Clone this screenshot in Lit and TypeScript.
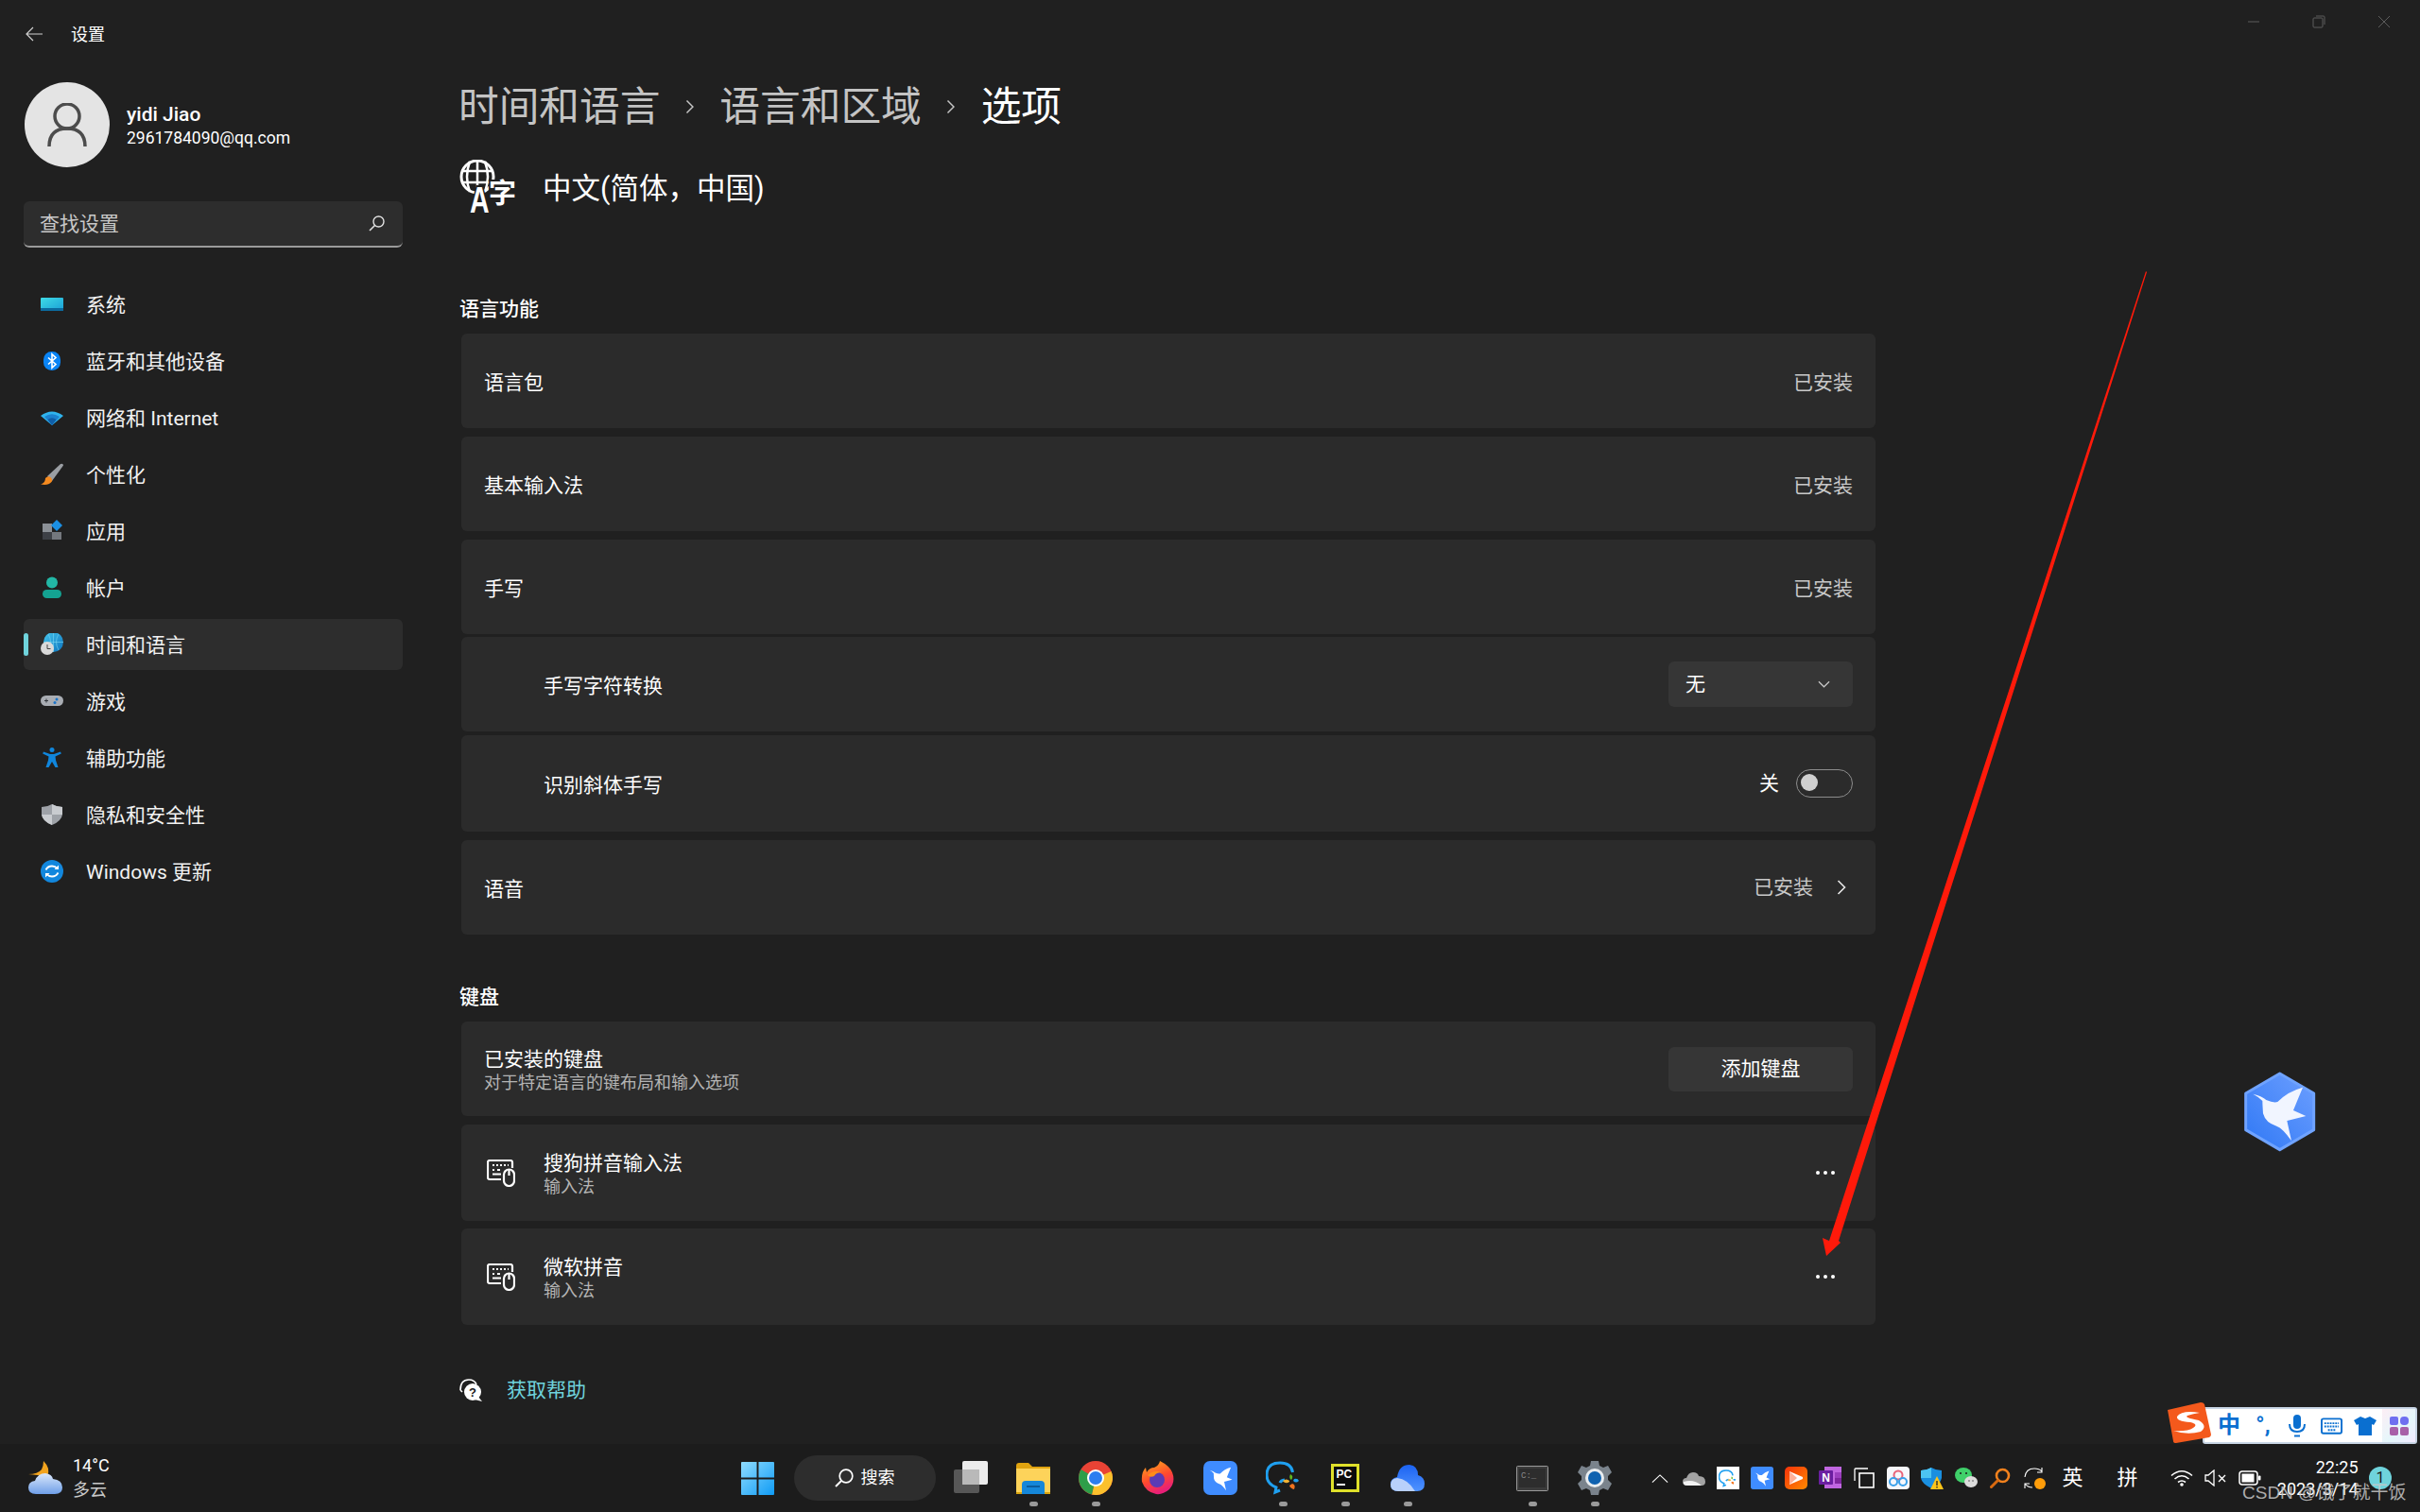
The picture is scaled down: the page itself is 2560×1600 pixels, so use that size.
import { LitElement, html, css, svg } from 'lit';
import { customElement } from 'lit/decorators.js';

const icon = (box: string, size: number, body: unknown, h = size) =>
  html`<svg width=${size} height=${h} viewBox=${box} style="display:block">${body}</svg>`;

// hummingbird from the download app, used on the desktop and in the taskbar
const BIRD = 'M130 143Q160 150 172 162Q195 172 208 168Q240 135 288 122Q272 160 258 195L298 213L238 228L252 292Q225 252 205 245Q170 235 162 205Q160 175 160 165Q145 150 130 143Z';

const navItems = [
  {
    label: '系统',
    icon: svg`<defs><linearGradient id="sys" x1="0" y1="0" x2="1" y2="1"><stop offset="0" stop-color="#3fdbe6"/><stop offset="1" stop-color="#1a9fd6"/></linearGradient></defs>
      <rect x="0" y="5" width="24" height="14" rx="1" fill="url(#sys)"/><rect x="0" y="16" width="24" height="3" fill="#0b6a9e"/>`,
  },
  {
    label: '蓝牙和其他设备',
    icon: svg`<rect x="3" y="2" width="18" height="20" rx="8.5" fill="#0a84f5"/><path d="M8 8.5l8 7-4 3.6V4.9l4 3.6-8 7" fill="none" stroke="#fff" stroke-width="1.6"/>`,
  },
  {
    label: '网络和 Internet',
    icon: svg`<path d="M0 10Q12 1 24 10L12 20Z" fill="#2fb4ee"/><path d="M4 11Q12 5.500 20 11L12 20Z" fill="#1c82cf"/><path d="M7.500 14Q12 10.500 16.500 14L12 20Z" fill="#0f5ea8"/>`,
  },
  {
    label: '个性化',
    icon: svg`<path d="M7 14L21 1q3-1 3 1.500L12 19Z" fill="#9a9ea3"/><path d="M0 22.500Q5 21 5 16q3-3 6-.5 2 2.500 .5 4.500Q8 24 0 22.500Z" fill="#f58a1f"/>`,
  },
  {
    label: '应用',
    icon: svg`<rect x="2" y="4" width="10" height="9" fill="#8b9096"/><rect x="2" y="13" width="10" height="8" fill="#3d4046"/><rect x="12" y="13" width="10" height="8" fill="#74787e"/><path d="M17 0l6 6-6 6-6-6Z" fill="#1b8fe3"/>`,
  },
  {
    label: '帐户',
    icon: svg`<circle cx="12" cy="6.500" r="6" fill="#22b8a6"/><rect x="2" y="14" width="20" height="9" rx="4.500" fill="#14a392"/>`,
  },
  {
    label: '时间和语言',
    icon: svg`<defs><linearGradient id="glb" x1="0" y1="0" x2="1" y2="1"><stop offset="0" stop-color="#45c6ee"/><stop offset="1" stop-color="#0c73bd"/></linearGradient></defs>
      <circle cx="13.500" cy="9.500" r="10.500" fill="url(#glb)"/><path d="M3 9.500h21M13.500-1v21M8 1q5 8 0 17M19 1q-5 8 0 17" fill="none" stroke="#7bd7f2" stroke-width=".6"/>
      <circle cx="7" cy="16" r="7" fill="#d9d9d9"/><path d="M7 12v4.500h3.500" fill="none" stroke="#444" stroke-width="1"/>`,
  },
  {
    label: '游戏',
    icon: svg`<rect x="0" y="6" width="24" height="11" rx="5.500" fill="#a9adb3"/><path d="M4 11.500h4M6 9.500v4" stroke="#33373c" stroke-width="1"/><circle cx="17" cy="10" r="1.500" fill="#1a74c9"/><circle cx="15" cy="13.500" r="1.500" fill="#1a74c9"/>`,
  },
  {
    label: '辅助功能',
    icon: svg`<circle cx="12" cy="3.500" r="2.500" fill="#1086dc"/><path d="M3 5.500l7 2.500h4l7-2.500 .8 2-6.300 3 .5 4 2.500 7.500h-3L12 16l-3.500 6h-3L8 14.500l.5-4-6.300-3Z" fill="#1086dc"/>`,
  },
  {
    label: '隐私和安全性',
    icon: svg`<path d="M12 1Q17 4 23 4V12Q22 19 12 23 2 19 1 12V4Q7 4 12 1Z" fill="#9ea2a8"/><path d="M12 1V12H23V4Q17 4 12 1ZM12 12H1Q2 19 12 23Z" fill="#c9ccd0"/>`,
  },
  {
    label: 'Windows 更新',
    icon: svg`<circle cx="12" cy="12" r="12" fill="#1287dd"/><path d="M5.500 10.500Q7.500 6.500 12 6.500q3.500 0 5.500 2.500M18.500 13.500Q16.500 17.500 12 17.500q-3.500 0-5.500-2.500" fill="none" stroke="#fff" stroke-width="1.800"/><path d="M19 5.500v4.500h-4.500ZM5 18.500V14h4.500Z" fill="#fff"/>`,
  },
];

const kbdIcon = icon('0 0 30 29', 30, svg`
  <path d="M15 21H3Q1 21 1 19V3Q1 1 3 1H25Q27 1 27 3V9" fill="none" stroke="#fff" stroke-width="2.200"/>
  <path d="M6 6h2M10 6h2M14 6h2M18 6h2M22 6h1M6 11h2M6 15.500h9M11 11h3" stroke="#fff" stroke-width="2"/>
  <rect x="18" y="10.500" width="11" height="17.500" rx="5.500" fill="#2b2b2b" stroke="#fff" stroke-width="2.200"/>
  <path d="M23.500 11v6" stroke="#fff" stroke-width="2.200"/>`, 29);

const birdTile = (size: number, radius: number) => icon('0 0 36 36', size, svg`
  <rect width="36" height="36" rx=${radius} fill="#3f8cff"/>
  <svg x="3" y="3" width="30" height="30" viewBox="105 95 210 210"><path d=${BIRD} fill="#fff"/></svg>`);

const wecomMark = (size: number) => icon('0 0 36 36', size, svg`
  <path d="M15 31l-5 2 1-5Q1 24 1 15 1 2 15 2 27 2 28.500 12" fill="none" stroke="#1fa0f0" stroke-width="3"/>
  <path d="M20 20q-4 .5-5 3" fill="none" stroke="#1fa0f0" stroke-width="3"/>
  <path d="M26 14q4 2 1 6-3-2-1-6Z" fill="#5fb81f"/><path d="M30 19q4-1 5 2-3 3-6 0Z" fill="#1fa0f0"/>
  <path d="M28 24q4 1 2 6-4-1-5-4Z" fill="#f0731f"/><path d="M25 22q-4 3-7-1 4-3 7 0Z" fill="#f2b233"/>`);

const taskApps = [
  {
    running: false,
    icon: icon('0 0 36 36', 36, svg`<rect x="9" y="0" width="27" height="25" rx="2" fill="#ececec"/><rect x="0" y="9" width="27" height="25" rx="2" fill="#5c5c5c" opacity=".92"/><rect x="9" y="9" width="18" height="16" fill="#b9b9b9"/>`),
  },
  {
    running: true,
    icon: icon('0 0 36 33', 36, svg`<path d="M0 3Q0 0 3 0H13L17 4H36V33H0Z" fill="#e0a30f"/><rect y="6" width="36" height="27" fill="#fdd35a"/><rect y="31" width="36" height="2" fill="#d9a30f"/>
      <rect x="6" y="23" width="24" height="10" fill="#0d6ab0"/><path d="M6 33V23Q6 19 10 19H26Q30 19 30 23V33Z" fill="#1587d9"/><rect x="11" y="24" width="14" height="2" fill="#0b5c9c"/>`, 33),
  },
  {
    running: true,
    icon: icon('0 0 36 36', 36, svg`<circle cx="18" cy="18" r="18" fill="#e94335"/><path d="M18 18L34.500 11A18 18 0 0 1 14 35.500Z" fill="#fbc02d"/><path d="M18 18L14 35.500A18 18 0 0 1 2.500 9Z" fill="#2e9e49"/><circle cx="18" cy="18" r="9" fill="#fff"/><circle cx="18" cy="18" r="7" fill="#2c7df0"/>`),
  },
  {
    running: false,
    icon: icon('0 0 36 36', 36, svg`<defs><linearGradient id="ff" x1="0" y1="0" x2=".4" y2="1"><stop offset="0" stop-color="#ffb31a"/><stop offset=".6" stop-color="#ff4a2e"/><stop offset="1" stop-color="#e81f78"/></linearGradient></defs>
      <path d="M20 0q10 5 13 12 4 10-3 18-7 6-14 5Q5 33 1 22 0 12 5 7l1 5q3-5 8-5 5-2 6-7Z" fill="url(#ff)"/><circle cx="17" cy="20" r="8" fill="#5b3bb5"/><path d="M7 15q6-6 15-3-6 0-8 4-4 2-7-1Z" fill="#ff8c1a"/>`),
  },
  { running: false, icon: birdTile(36, 7) },
  { running: true, icon: wecomMark(36) },
  {
    running: true,
    icon: html`<div class="pc"><div class="pc-in">PC<i></i></div></div>`,
  },
  {
    running: true,
    icon: icon('0 0 36 28', 36, svg`<defs><linearGradient id="cl" x1="0" y1="0" x2="0" y2="1"><stop offset="0" stop-color="#1c63f2"/><stop offset="1" stop-color="#4f93ff"/></linearGradient></defs>
      <path d="M8 28Q0 28 0 21 0 14 7 13 9 0 20 0 29 1 29 11 36 13 36 20 36 28 28 28Z" fill="url(#cl)"/><path d="M8 28Q0 28 0 21 0 15 7 14 18 15 26 28Z" fill="#b8d0fb"/>`, 28),
  },
  { running: false, icon: html`` },
  {
    running: true,
    icon: icon('0 0 34 27', 34, svg`<rect x=".5" y=".5" width="33" height="26" rx="1" fill="#3b3b3b" stroke="#9a9a9a"/><rect x="3" y="3" width="28" height="20" fill="#2d2d2d"/><text x="5" y="13" font-size="9" fill="#8a8a8a" font-family="Liberation Mono">C:\_</text>`, 27),
  },
  {
    running: true,
    icon: icon('0 0 36 36', 36, svg`<path d="M14 0h8l1 5 4 2 5-2 4 7-4 4v4l4 4-4 7-5-2-4 2-1 5h-8l-1-5-4-2-5 2-4-7 4-4v-4l-4-4 4-7 5 2 4-2Z" fill="#7a838c"/><circle cx="18" cy="18" r="10" fill="#e9edf0"/><circle cx="18" cy="18" r="7" fill="#0f62b0"/>`),
  },
];

const trayIcons = [
  icon('0 0 20 10', 18, svg`<path d="M1 9.500L10 1l9 8.500" fill="none" stroke="#fff" stroke-width="1.200"/>`, 9),
  icon('0 0 24 16', 24, svg`<path d="M5 16Q0 16 0 12 0 8 4 8 6 2 11 2 16 2 17 6 24 6 24 12 24 16 20 16Z" fill="#a3a3a3"/><path d="M5 16Q0 16 1 12 12 9 20 16Z" fill="#f2f2f2"/>`, 16),
  html`<div class="tile white">${wecomMark(19)}</div>`,
  birdTile(24, 4),
  icon('0 0 24 24', 24, svg`<defs><linearGradient id="or" x1="0" y1="0" x2="1" y2="1"><stop offset="0" stop-color="#f5320a"/><stop offset="1" stop-color="#ff8a00"/></linearGradient></defs><rect width="24" height="24" rx="5" fill="url(#or)"/><path d="M5 5l14 6v2L5 19Z" fill="#fff"/><path d="M5 5l8 7-8 7Z" fill="#ffb199"/>`),
  icon('0 0 24 24', 24, svg`<rect x="6" y="0" width="18" height="23" fill="#c066e0"/><rect x="17" y="6" width="7" height="6" fill="#9c3fbf"/><rect x="17" y="12" width="7" height="6" fill="#80279f"/><rect x="0" y="4" width="15" height="15" rx="1" fill="#6a1fa0"/><text x="7.500" y="16" font-size="12" font-weight="700" text-anchor="middle" fill="#fff" font-family="Liberation Sans">N</text>`),
  icon('0 0 22 22', 22, svg`<path d="M1 14V2Q1 1 2 1H15" fill="none" stroke="#fff" stroke-width="1.300"/><rect x="6" y="6" width="15" height="15" fill="none" stroke="#fff" stroke-width="1.600"/>`),
  icon('0 0 24 24', 24, svg`<rect width="24" height="24" rx="4" fill="#f6f7fb"/><circle cx="12" cy="9" r="4.500" fill="none" stroke="#e8647a" stroke-width="2"/><circle cx="7" cy="16" r="4" fill="none" stroke="#3aa0ea" stroke-width="2"/><circle cx="17" cy="16" r="4" fill="none" stroke="#3aa0ea" stroke-width="2"/>`),
  icon('0 0 24 24', 24, svg`<path d="M11 1Q16 4 22 4V12Q21 18 11 23 1 18 0 12V4Q6 4 11 1Z" fill="#1a8fe0"/><path d="M11 1V12H0V4Q6 4 11 1Z" fill="#4cc4f2"/><path d="M17 10l7 14H10Z" fill="#fcc419"/><path d="M17 15v5M17 21v1.500" stroke="#222" stroke-width="1.300"/>`),
  icon('0 0 24 22', 24, svg`<ellipse cx="9" cy="8" rx="9" ry="8" fill="#3fd06a"/><circle cx="6" cy="6" r="1" fill="#1c1c1c"/><circle cx="12" cy="6" r="1" fill="#1c1c1c"/><ellipse cx="17" cy="15" rx="7" ry="6" fill="#dcdcdc"/><circle cx="15" cy="14" r=".8" fill="#555"/><circle cx="19" cy="14" r=".8" fill="#555"/>`, 22),
  icon('0 0 22 22', 22, svg`<circle cx="13.500" cy="8.500" r="6.500" fill="none" stroke="#f2811d" stroke-width="2.600"/><path d="M8.500 13.500L1.500 20.500" stroke="#d96a10" stroke-width="3" stroke-linecap="round"/>`),
  icon('0 0 24 24', 24, svg`<path d="M2 11Q3 2 12 2q5 0 8 3M20 1v5h-5M2 23v-5h5M2 18q3 4 8 4" fill="none" stroke="#fff" stroke-width="1.100"/><circle cx="18" cy="18" r="6" fill="#ff9d0a"/>`),
];

@customElement('app-root')
export class AppRoot extends LitElement {
  static styles = css`
    :host {
      display: block;
      width: 2560px;
      height: 1600px;
      position: relative;
      overflow: hidden;
      background: #202020;
      color: #fff;
      font-family: Roboto, 'Noto Sans CJK SC', sans-serif;
      font-size: 21px;
      line-height: 30px;
    }

    .page {
      display: flex;
      flex-direction: column;
      height: 100%;
    }

    .main {
      flex: 1;
      display: flex;
      min-height: 0;
    }

    /* sidebar */
    .side {
      width: 486px;
      flex: none;
      box-sizing: border-box;
      padding: 21px 60px 0 25px;
    }
    .back {
      display: flex;
      align-items: center;
      gap: 30px;
      padding-left: 2px;
      height: 30px;
      font-size: 18px;
    }
    .back span {
      padding-top: 2px;
    }
    .user {
      display: flex;
      align-items: center;
      gap: 18px;
      margin: 36px 0 0 1px;
    }
    .avatar {
      width: 90px;
      height: 90px;
      border-radius: 50%;
      background: #e4e4e4;
      display: flex;
      align-items: center;
      justify-content: center;
    }
    .who {
      padding-top: 2px;
    }
    .name {
      font-weight: 500;
      line-height: 26px;
    }
    .mail {
      font-size: 17.500px;
      line-height: 24px;
    }
    .search {
      display: flex;
      align-items: center;
      justify-content: space-between;
      box-sizing: border-box;
      height: 49px;
      margin-top: 36px;
      padding: 0 19px 0 17px;
      background: #2d2d2d;
      border-radius: 6px;
      border-bottom: 2px solid #9a9a9a;
      color: #c8c8c8;
    }
    .search span {
      padding-top: 1px;
    }
    .nav {
      margin-top: 33px;
      display: flex;
      flex-direction: column;
      gap: 6px;
    }
    .nav-item {
      display: flex;
      align-items: center;
      gap: 24px;
      height: 54px;
      padding-left: 18px;
      border-radius: 6px;
      position: relative;
      color: #f2f2f2;
    }
    .nav-item span {
      padding-top: 2px;
    }
    .nav-item.active {
      background: #2d2d2d;
    }
    .nav-item.active::before {
      content: '';
      position: absolute;
      left: 0;
      top: 15px;
      width: 5px;
      height: 24px;
      border-radius: 3px;
      background: #6fd3dc;
    }

    /* content */
    .content {
      width: 1498px;
      flex: none;
      padding-top: 83px;
    }
    .crumbs {
      display: flex;
      align-items: center;
      height: 60px;
      margin-left: -1px;
      font-size: 42.700px;
      line-height: 60px;
      color: #c4c4c4;
    }
    .crumbs svg {
      margin: 0 26.500px;
    }
    .crumbs .now {
      color: #fff;
    }
    .lang {
      display: flex;
      gap: 28px;
      margin-top: 26px;
      height: 58px;
      font-size: 30.500px;
      line-height: 62px;
    }
    h2 {
      margin: 85px 0 11px;
      font-size: 21px;
      font-weight: 500;
      line-height: 30px;
    }
    h2.second {
      margin: 51px 0 11px;
    }
    .cards {
      display: flex;
      flex-direction: column;
      margin-left: 2px;
      gap: 9px;
    }
    .card {
      display: flex;
      align-items: center;
      justify-content: space-between;
      box-sizing: border-box;
      height: 100px;
      padding: 0 24px;
      background: #2b2b2b;
      border-radius: 6px;
    }
    .card > span {
      padding-top: 3px;
    }
    .card.sub {
      margin-top: -6px;
    }
    .card.sub2 {
      margin-top: -5px;
      height: 102px;
    }
    .card.tall {
      height: 102px;
      padding-right: 43px;
    }
    .card.tall + .card.tall {
      margin-top: -1px;
    }
    .card.indent {
      padding-left: 87px;
    }
    .muted {
      color: #c8c8c8;
    }
    .lead {
      display: flex;
      align-items: center;
      gap: 30px;
      padding-left: 3px;
    }
    .title {
      line-height: 26px;
      padding-top: 2px;
    }
    .desc {
      font-size: 18px;
      line-height: 22px;
      padding-top: 1px;
      color: #b4b4b4;
    }
    .right {
      display: flex;
      align-items: center;
    }
    .select {
      display: flex;
      align-items: center;
      justify-content: space-between;
      box-sizing: border-box;
      width: 195px;
      height: 48px;
      padding: 0 24px 0 18px;
      background: #363636;
      border-radius: 6px;
    }
    .toggle {
      box-sizing: border-box;
      width: 60px;
      height: 30px;
      margin-left: 18px;
      padding: 4px;
      border: 1.500px solid #8d8d8d;
      border-radius: 15px;
    }
    .toggle i {
      display: block;
      width: 18px;
      height: 18px;
      border-radius: 50%;
      background: #cfcfcf;
    }
    .add {
      display: flex;
      align-items: center;
      justify-content: center;
      width: 195px;
      height: 47px;
      background: #363636;
      border-radius: 6px;
    }
    .dots {
      display: flex;
      gap: 3.500px;
    }
    .dots i {
      width: 4.500px;
      height: 4.500px;
      border-radius: 50%;
      background: #fff;
    }
    .help {
      display: flex;
      align-items: center;
      gap: 26px;
      margin-top: 54px;
      color: #6fd3dc;
    }

    /* taskbar */
    .taskbar {
      display: flex;
      align-items: center;
      flex: none;
      height: 72px;
      background: #1c1c1c;
      position: relative;
    }
    .weather {
      display: flex;
      align-items: center;
      gap: 11px;
      width: 768.500px;
      box-sizing: border-box;
      padding-left: 30px;
      flex: none;
      font-size: 18px;
      line-height: 26px;
    }
    .weather span {
      display: block;
    }
    .slot {
      width: 66px;
      height: 72px;
      flex: none;
      display: flex;
      align-items: center;
      justify-content: center;
      position: relative;
    }
    .slot.running::after {
      content: '';
      position: absolute;
      left: 29px;
      bottom: 6px;
      width: 9px;
      height: 5px;
      border-radius: 3px;
      background: #9a9a9a;
    }
    .pill {
      display: flex;
      align-items: center;
      justify-content: center;
      gap: 8px;
      width: 150px;
      height: 48px;
      margin: 0 4px 0 5px;
      flex: none;
      border-radius: 24px;
      background: #2d2d2d;
      font-size: 18px;
    }
    .pc {
      box-sizing: border-box;
      width: 30px;
      height: 30px;
      border: 3px solid #dfe02a;
      background: #0c0c0c;
    }
    .pc-in {
      color: #fff;
      font: 700 12px/14px 'Liberation Sans', sans-serif;
      padding: 1px 0 0 3px;
    }
    .pc-in i {
      display: block;
      width: 9px;
      height: 1.500px;
      margin-top: 3px;
      background: #fff;
    }
    .tray {
      display: flex;
      align-items: center;
      margin-left: 18px;
    }
    .tray-slot {
      width: 36px;
      flex: none;
      display: flex;
      align-items: center;
      justify-content: center;
    }
    .tile {
      width: 24px;
      height: 24px;
      display: flex;
      align-items: center;
      justify-content: center;
    }
    .tile.white {
      background: #fff;
    }
    .ime {
      width: 46px;
      flex: none;
      text-align: center;
      font-size: 22px;
      margin-right: 12px;
    }
    .ime.last {
      margin-right: 16px;
    }
    .clock {
      width: 97px;
      flex: none;
      font-size: 18px;
      line-height: 23px;
      text-align: right;
      white-space: nowrap;
    }
    .badge {
      position: absolute;
      left: 2506px;
      top: 24px;
      width: 24px;
      height: 24px;
      border-radius: 50%;
      background: #6fd3dc;
      color: #1c1c1c;
      font-size: 16px;
      line-height: 24px;
      text-align: center;
    }

    /* things that lie on top of the window */
    .winctl {
      position: absolute;
      top: 15px;
      right: 30px;
      display: flex;
      gap: 53px;
    }
    .arrow {
      position: absolute;
      inset: 0;
      pointer-events: none;
    }
    .desk-bird {
      position: absolute;
      left: 2340px;
      top: 1110px;
    }
    .sogou {
      position: absolute;
      left: 2330px;
      top: 1489px;
      width: 227px;
      height: 39px;
      box-sizing: border-box;
      display: flex;
      align-items: center;
      padding-left: 8px;
      background: #fff;
      border: 2px solid #c9d6e6;
      border-radius: 3px;
      color: #0a6fd0;
    }
    .sogou-logo {
      position: absolute;
      left: -42px;
      top: -8px;
    }
    .sogou b {
      width: 36px;
      flex: none;
      text-align: center;
      font-size: 24px;
      line-height: 35px;
      font-weight: 700;
    }
    .sogou .si {
      width: 36px;
      flex: none;
      display: flex;
      justify-content: center;
    }
    .sogou .grid {
      margin-left: auto;
      width: 36px;
      height: 35px;
      display: flex;
      align-items: center;
      justify-content: center;
      background: linear-gradient(135deg, #fdeef5, #e4f7fb 60%, #f3e9ff);
    }
    .mark {
      position: absolute;
      left: 2372px;
      top: 1567px;
      font-family: 'Liberation Sans', 'Noto Sans CJK SC', sans-serif;
      font-size: 19px;
      line-height: 26px;
      color: rgba(200, 200, 200, 0.85);
      white-space: nowrap;
    }
  `;

  private chevron(size = 14) {
    return icon('0 0 10 16', size * 0.62, svg`<path d="M1.500 1.500L8 8l-6.500 6.500" fill="none" stroke="#c4c4c4" stroke-width="1.500"/>`, size);
  }

  private row(label: string, sub: string) {
    return html`<div class="card tall">
      <div class="lead">
        ${kbdIcon}
        <div>
          <div class="title">${label}</div>
          <div class="desc">${sub}</div>
        </div>
      </div>
      <div class="dots"><i></i><i></i><i></i></div>
    </div>`;
  }

  private sidebar() {
    return html`<aside class="side">
      <div class="back">
        ${icon('0 0 18 16', 18, svg`<path d="M8 1L1 8l7 7M1 8h17" fill="none" stroke="#d0d0d0" stroke-width="1.200"/>`, 16)}
        <span>设置</span>
      </div>
      <div class="user">
        <div class="avatar">
          ${icon('0 0 42 46', 42, svg`<circle cx="21" cy="14" r="13" fill="none" stroke="#4c4c4c" stroke-width="3.500"/><path d="M2 46Q2 27 21 27 40 27 40 46" fill="none" stroke="#4c4c4c" stroke-width="3.500"/>`, 46)}
        </div>
        <div class="who">
          <div class="name">yidi Jiao</div>
          <div class="mail">2961784090@qq.com</div>
        </div>
      </div>
      <div class="search">
        <span>查找设置</span>
        ${icon('0 0 17 17', 17, svg`<circle cx="10.500" cy="6.500" r="5.500" fill="none" stroke="#e0e0e0" stroke-width="1.400"/><path d="M6.500 10.500L1 16" stroke="#e0e0e0" stroke-width="1.600"/>`)}
      </div>
      <nav class="nav">
        ${navItems.map(
          (item) => html`<div class="nav-item ${item.label === '时间和语言' ? 'active' : ''}">
            ${icon('0 0 24 24', 24, item.icon)}
            <span>${item.label}</span>
          </div>`,
        )}
      </nav>
    </aside>`;
  }

  private content() {
    return html`<main class="content">
      <div class="crumbs">
        <span>时间和语言</span>${this.chevron(16)}<span>语言和区域</span>${this.chevron(16)}<span class="now">选项</span>
      </div>
      <div class="lang">
        ${icon('0 0 60 70', 60, svg`
          <circle cx="19" cy="18" r="17" fill="none" stroke="#fff" stroke-width="3"/>
          <path d="M2 12h34M2 24h34M19 1v34M11 2Q5 18 11 34M27 2Q33 18 27 34" fill="none" stroke="#fff" stroke-width="2.500"/>
          <text transform="translate(11 56) scale(.75 1)" font-size="38" font-weight="700" fill="#fff" stroke="#202020" stroke-width="4" paint-order="stroke" font-family="Liberation Sans">A</text>
          <text x="31" y="46" font-size="29" font-weight="700" fill="#fff" stroke="#202020" stroke-width="4" paint-order="stroke" font-family="Noto Sans CJK SC">字</text>`, 70)}
        <span>中文(简体，中国)</span>
      </div>
      <h2>语言功能</h2>
      <div class="cards">
        <div class="card"><span>语言包</span><span class="muted">已安装</span></div>
        <div class="card"><span>基本输入法</span><span class="muted">已安装</span></div>
        <div class="card"><span>手写</span><span class="muted">已安装</span></div>
        <div class="card sub indent">
          <span>手写字符转换</span>
          <div class="select">
            <span>无</span>
            ${icon('0 0 14 8', 13, svg`<path d="M1 1l6 6 6-6" fill="none" stroke="#c8c8c8" stroke-width="1.300"/>`, 8)}
          </div>
        </div>
        <div class="card sub2 indent">
          <span>识别斜体手写</span>
          <div class="right"><span>关</span><div class="toggle"><i></i></div></div>
        </div>
        <div class="card">
          <span>语音</span>
          <div class="right">
            <span class="muted">已安装</span>
            <span style="margin:0 7px 0 25px">${icon('0 0 10 16', 10, svg`<path d="M1.500 1L8.500 8l-7 7" fill="none" stroke="#e8e8e8" stroke-width="1.600"/>`, 16)}</span>
          </div>
        </div>
      </div>
      <h2 class="second">键盘</h2>
      <div class="cards">
        <div class="card">
          <div>
            <div class="title">已安装的键盘</div>
            <div class="desc">对于特定语言的键布局和输入选项</div>
          </div>
          <div class="add">添加键盘</div>
        </div>
        ${this.row('搜狗拼音输入法', '输入法')}
        ${this.row('微软拼音', '输入法')}
      </div>
      <div class="help">
        ${icon('0 0 24 24', 24, svg`<path d="M1 12Q1 1 10 1q6 0 8 5" fill="none" stroke="#fff" stroke-width="1.600"/><path d="M1 12l2 2" stroke="#fff" stroke-width="1.600"/><circle cx="14" cy="14" r="9" fill="#fff"/><path d="M20 19l4 5-8-2Z" fill="#fff"/><text x="14" y="19" font-size="13" font-weight="700" text-anchor="middle" fill="#202020" font-family="Liberation Sans">?</text>`)}
        <span>获取帮助</span>
      </div>
    </main>`;
  }

  private taskbar() {
    return html`<footer class="taskbar">
      <div class="weather">
        ${icon('0 0 36 36', 36, svg`<defs><linearGradient id="cld" x1="0" y1="0" x2="0" y2="1"><stop offset="0" stop-color="#dbe8fb"/><stop offset="1" stop-color="#6f9fe8"/></linearGradient></defs>
          <path d="M16 0Q24 8 20 16L0 14Q10 14 14 9 16 5 16 0Z" fill="#f2a41f"/>
          <path d="M8 35Q0 35 0 28 0 22 7 21 10 13 18 13 25 14 26 19 36 20 36 28 36 35 28 35Z" fill="url(#cld)"/>`)}
        <div><span>14°C</span><span class="muted">多云</span></div>
      </div>
      <div class="slot">
        ${icon('0 0 36 36', 35, svg`<defs><linearGradient id="win" x1="0" y1="0" x2="1" y2="1"><stop offset="0" stop-color="#8fdcff"/><stop offset="1" stop-color="#0f9bf5"/></linearGradient></defs>
          <path d="M1 0H17V17H0V1Q0 0 1 0ZM19 0H35Q36 0 36 1V17H19ZM0 19H17V36H1Q0 36 0 35ZM19 19H36V35Q36 36 35 36H19Z" fill="url(#win)"/>`)}
      </div>
      <div class="pill">
        ${icon('0 0 20 20', 20, svg`<circle cx="12" cy="8" r="6.800" fill="none" stroke="#fff" stroke-width="1.700"/><path d="M7 13L1 19" stroke="#fff" stroke-width="2"/>`)}
        <span>搜索</span>
      </div>
      ${taskApps.map((app) => html`<div class="slot ${app.running ? 'running' : ''}">${app.icon}</div>`)}
      <div class="tray">
        ${trayIcons.map((ic) => html`<div class="tray-slot">${ic}</div>`)}
        <div class="ime">英</div>
        <div class="ime last">拼</div>
        <div class="tray-slot">
          ${icon('0 0 24 18', 24, svg`<path d="M1 6.500Q12-3 23 6.500M4.500 10Q12 3.500 19.500 10M8 13.500Q12 10.500 16 13.500" fill="none" stroke="#fff" stroke-width="1.600"/><circle cx="12" cy="16" r="1.800" fill="#fff"/>`, 18)}
        </div>
        <div class="tray-slot">
          ${icon('0 0 24 18', 24, svg`<path d="M1 6v6h3l6 5V1L4 6Z" fill="none" stroke="#fff" stroke-width="1.300"/><path d="M15 6l7 7M22 6l-7 7" stroke="#fff" stroke-width="1.400"/>`, 18)}
        </div>
        <div class="tray-slot">
          ${icon('0 0 24 16', 24, svg`<rect x="1" y="1" width="19" height="14" rx="3" fill="none" stroke="#fff" stroke-width="1.500"/><rect x="3.500" y="3.500" width="13" height="9" fill="#fff"/><rect x="21" y="5.500" width="2.500" height="5" rx="1" fill="#fff"/>`, 16)}
        </div>
        <div class="clock">
          <div>22:25</div>
          <div>2023/3/14</div>
        </div>
      </div>
      <div class="badge">1</div>
    </footer>`;
  }

  render() {
    return html`
      <div class="page">
        <div class="main">${this.sidebar()}${this.content()}</div>
        ${this.taskbar()}
      </div>

      <div class="winctl">
        ${icon('0 0 16 16', 16, svg`<path d="M2 8h12" stroke="#5c5c5c" stroke-width="1"/>`)}
        ${icon('0 0 16 16', 16, svg`<rect x="2" y="4" width="10" height="10" rx="1" fill="none" stroke="#5c5c5c"/><path d="M5 2h8q1 0 1 1v8" fill="none" stroke="#5c5c5c"/>`)}
        ${icon('0 0 16 16', 16, svg`<path d="M2 2l12 12M14 2L2 14" stroke="#5c5c5c" stroke-width="1"/>`)}
      </div>

      <svg class="desk-bird" width="150" height="130" viewBox="0 0 450 390">
        <defs><linearGradient id="hex" x1="1" y1="0" x2="0" y2="1"><stop offset="0" stop-color="#6d9fff"/><stop offset="1" stop-color="#2f78f5"/></linearGradient></defs>
        <path d="M215 78L323 141V257L215 320 107 257V141Z" fill="url(#hex)" stroke="#6fa3ff" stroke-width="9" stroke-linejoin="round"/>
        <path d=${BIRD} fill="#f1f5ff"/>
      </svg>

      <svg class="arrow" width="2560" height="1600" viewBox="0 0 2560 1600">
        <path d="M2270 287L2271 288 1945 1313 1947 1315 1932 1329 1928 1310 1935 1313Z" fill="#ff1a0a"/>
      </svg>

      <div class="sogou">
        <svg class="sogou-logo" width="50" height="46" viewBox="0 0 50 46">
          <path d="M3 9L38 1Q41 1 42 3L49 35Q49 37 47 38L12 44Q9 44 9 42Z" fill="#f4591c"/>
          <path d="M37 12Q18 9 13 16 12 21 27 22 36 24 30 28 24 32 9 31 24 36 38 32 46 26 36 20 20 17 24 15 30 13 37 12Z" fill="#fff"/>
        </svg>
        <b>中</b>
        <b>°,</b>
        <span class="si">${icon('0 0 18 24', 18, svg`<rect x="5" y="0" width="8" height="15" rx="4" fill="#0a6fd0"/><path d="M1 10q0 8 8 8t8-8" fill="none" stroke="#0a6fd0" stroke-width="2"/><path d="M6 22.500h6" stroke="#0a6fd0" stroke-width="2"/>`, 24)}</span>
        <span class="si">${icon('0 0 24 18', 23, svg`<rect x="1" y="1" width="22" height="16" rx="2" fill="none" stroke="#0a6fd0" stroke-width="2"/><path d="M4 6h16M4 9.500h16M8 13.500h8" stroke="#0a6fd0" stroke-width="2" stroke-dasharray="2 1"/>`, 18)}</span>
        <span class="si">${icon('0 0 24 20', 24, svg`<path d="M7 0L12 2 17 0 24 4 21 9 19 8V20H5V8L3 9 0 4Z" fill="#0a6fd0"/>`, 20)}</span>
        <span class="grid">${icon('0 0 20 20', 20, svg`<rect width="9" height="9" rx="2" fill="#6f6ff0"/><rect x="11" width="9" height="9" rx="4" fill="#6f6ff0"/><rect y="11" width="9" height="9" rx="2" fill="#a860a8"/><rect x="11" y="11" width="9" height="9" rx="2" fill="#a860a8"/>`)}</span>
      </div>

      <div class="mark">CSDN @饿了就干饭</div>
    `;
  }
}
